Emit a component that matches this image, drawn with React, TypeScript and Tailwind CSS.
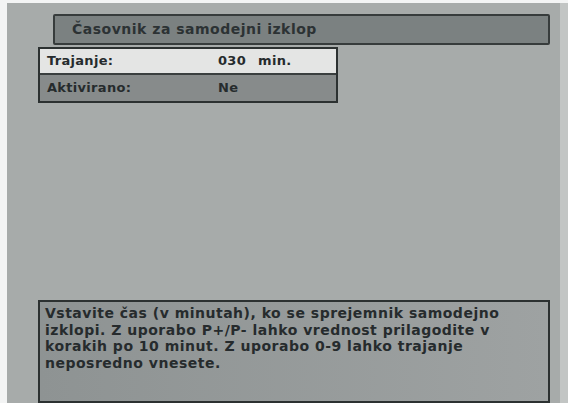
import React from "react";

export default function App() {
  const font = { fontFamily: '"DejaVu Sans", "Noto Sans", sans-serif' };
  return (
    <div className="w-[568px] h-[403px] bg-[#f3f4f4] flex overflow-hidden" style={font}>
      <div className="ml-[7px] mt-[3px] w-[553px] h-[400px] bg-[#a7abaa] flex flex-col text-[#262b2d]">
        <div className="ml-[46px] mt-[11px] w-[497px] h-[31px] bg-[#7b8181] border-2 border-[#373c3c] rounded-[2px] flex items-center pl-[17px] text-[14px] font-semibold tracking-[0.5px] text-[#2c3234]">
          Časovnik za samodejni izklop
        </div>
        <div className="ml-[31px] mt-[2px] w-[300px] h-[56px] border-2 border-[#2c3131] flex flex-col text-[13px] font-semibold tracking-[0.3px]">
          <div className="h-[26px] bg-[#e4e5e4] flex items-center border-b-2 border-[#3a3f3f]">
            <span className="pl-[7px] w-[178px]">Trajanje:</span>
            <span>030</span>
            <span className="ml-[12px]">min.</span>
          </div>
          <div className="flex-1 bg-[#878b8b] flex items-center">
            <span className="pl-[7px] w-[178px]">Aktivirano:</span>
            <span>Ne</span>
          </div>
        </div>
        <div className="flex-1" />
        <div className="ml-[31px] w-[512px] h-[103px] border-2 border-[#2c3131] bg-gradient-to-r from-[#8e9393] to-[#9ea2a2] px-[5px] pt-[3px] text-[14px] leading-[16.5px] font-semibold tracking-[0.5px]">
          Vstavite čas (v minutah), ko se sprejemnik samodejno<br />
          izklopi. Z uporabo P+/P- lahko vrednost prilagodite v<br />
          korakih po 10 minut. Z uporabo 0-9 lahko trajanje<br />
          neposredno vnesete.
        </div>
      </div>
      <div className="mt-[3px] flex-1 h-[400px] bg-[#c2c5c4]" />
    </div>
  );
}
